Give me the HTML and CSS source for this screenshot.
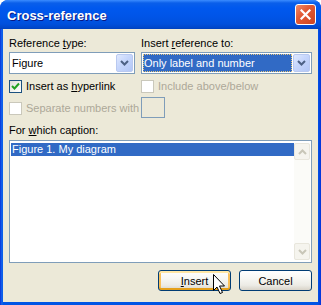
FILE: index.html
```html
<!DOCTYPE html>
<html lang="en">
<head>
    <meta charset="UTF-8">
    <title>Cross-reference</title>
    <link rel="stylesheet" href="styles.css">
</head>
<body>
    <div class="window">
        <div class="titlebar">
            <span class="title">Cross-reference</span>
            <span class="close">
                <svg width="11" height="11" viewBox="0 0 11 11"><path d="M1.5 1.5 L9.5 9.5 M9.5 1.5 L1.5 9.5" stroke="#fff" stroke-width="2.2" stroke-linecap="square"/></svg>
            </span>
        </div>
        <div class="client">
            <div class="grid">
                <div class="field">
                    <label>Reference <u>t</u>ype:</label>
                    <div class="combo">
                        <span class="combo-text">Figure</span>
                        <span class="drop"><svg width="9" height="6" viewBox="0 0 9 6"><path d="M1 1 L4.5 4.5 L8 1" fill="none" stroke="#4d6185" stroke-width="2"/></svg></span>
                    </div>
                </div>
                <div class="field">
                    <label>Insert <u>r</u>eference to:</label>
                    <div class="combo">
                        <span class="combo-text focused">Only label and number</span>
                        <span class="drop"><svg width="9" height="6" viewBox="0 0 9 6"><path d="M1 1 L4.5 4.5 L8 1" fill="none" stroke="#4d6185" stroke-width="2"/></svg></span>
                    </div>
                </div>
                <div class="check-row">
                    <span class="check checked"><svg width="9" height="9" viewBox="0 0 9 9"><path d="M1 4 L3.5 6.5 L8 1.5" fill="none" stroke="#21a121" stroke-width="2"/></svg></span>
                    <span>Insert as <u>h</u>yperlink</span>
                </div>
                <div class="check-row disabled">
                    <span class="check"></span>
                    <span>Include above/below</span>
                </div>
                <div class="check-row disabled second">
                    <span class="check"></span>
                    <span>Separate numbers with</span>
                </div>
                <div class="small-box"></div>
            </div>

            <label class="caption-label">For <u>w</u>hich caption:</label>
            <div class="listbox">
                <div class="items">
                    <div class="item selected">Figure 1. My diagram</div>
                </div>
                <div class="scrollbar">
                    <span class="sb-btn"><svg width="9" height="6" viewBox="0 0 9 6"><path d="M1 5 L4.5 1.5 L8 5" fill="none" stroke="#c8c6b8" stroke-width="2"/></svg></span>
                    <span class="sb-track"></span>
                    <span class="sb-btn"><svg width="9" height="6" viewBox="0 0 9 6"><path d="M1 1 L4.5 4.5 L8 1" fill="none" stroke="#c8c6b8" stroke-width="2"/></svg></span>
                </div>
            </div>

            <div class="buttons">
                <button class="btn hot"><u>I</u>nsert</button>
                <button class="btn">Cancel</button>
            </div>
        </div>

        <svg class="cursor" width="14" height="22" viewBox="0 0 14 22">
            <path d="M1.5 1.5 L1.5 17.5 L5 14 L8 20.5 L10.5 19.5 L7.5 13 L12.5 13 Z" fill="#fff" stroke="#000" stroke-width="1" stroke-linejoin="miter"/>
        </svg>
    </div>
</body>
</html>
```

FILE: styles.css
```css
html {
    background: #ffffff;
}

body {
    margin: 0;
    font-family: "Liberation Sans", Arial, sans-serif;
    font-size: 11px;
    color: #000;
}

.window {
    position: relative;
    width: 321px;
    height: 305px;
    display: flex;
    flex-direction: column;
    background: linear-gradient(90deg, #0831d9 0, #166aee 2px, #0055e5 3px, #0055e5 318px, #0831d9 100%);
    border-radius: 8px 8px 0 0;
    overflow: hidden;
}

.titlebar {
    height: 29px;
    flex: none;
    display: flex;
    align-items: center;
    justify-content: space-between;
    padding: 0 5px 0 7px;
    background: linear-gradient(180deg, #3b8cff 0, #0a5fea 3px, #0058ee 8px, #0055e8 16px, #0050dc 24px, #0046c8 28px, #0040b8 29px);
}

.title {
    color: #fff;
    font-weight: bold;
    font-size: 13px;
    padding-top: 1px;
    text-shadow: 1px 1px 0 #0a1883;
}

.close {
    width: 19px;
    height: 19px;
    display: flex;
    align-items: center;
    justify-content: center;
    border: 1px solid #fff;
    border-radius: 3px;
    background: linear-gradient(135deg, #f08c6c 0, #e25a36 40%, #cc4420 100%);
}

.client {
    flex: 1;
    margin: 0 3px 3px 3px;
    background: #ece9d8;
    padding: 8px 6px 11px 6px;
    display: flex;
    flex-direction: column;
}

.grid {
    display: grid;
    grid-template-columns: 126px 171px;
    column-gap: 6px;
}

label {
    display: block;
    line-height: 13px;
}

.field label {
    margin-bottom: 2px;
}

.combo {
    height: 18px;
    border: 1px solid #7f9db9;
    background: #fff;
    padding: 1px;
    display: flex;
    align-items: stretch;
    gap: 1px;
}

.combo-text {
    flex: 1;
    line-height: 18px;
    padding-left: 1px;
}

.combo-text.focused {
    background: #316ac5;
    color: #fff;
    border: 1px dotted #e8c87a;
    line-height: 16px;
    padding-left: 0;
}

.drop {
    width: 15px;
    flex: none;
    display: flex;
    align-items: center;
    justify-content: center;
    border: 1px solid #b9c9f0;
    border-radius: 2px;
    background: linear-gradient(135deg, #e0e9fe 0, #c6d6fc 45%, #b3c7f6 100%);
}

.check-row {
    display: flex;
    align-items: center;
    gap: 4px;
    line-height: 13px;
    margin-top: 6px;
    white-space: nowrap;
}

.check-row.second {
    margin-top: 6px;
}

.check-row.disabled {
    color: #aca899;
}

.check {
    width: 11px;
    height: 11px;
    flex: none;
    border: 1px solid #1c5180;
    background: linear-gradient(135deg, #dcdcd7 0, #f4f4f0 60%, #fff 100%);
    display: flex;
    align-items: center;
    justify-content: center;
}

.disabled .check {
    border-color: #cac8bb;
    background: #fff;
}

.small-box {
    width: 22px;
    height: 19px;
    margin-top: 4px;
    border: 1px solid #7f9db9;
    background: #ece9d8;
}

.caption-label {
    margin-top: 6px;
    margin-bottom: 3px;
}

.listbox {
    height: 117px;
    border: 1px solid #7f9db9;
    background: #fff;
    padding: 2px 1px 2px 1px;
    display: flex;
}

.items {
    flex: 1;
}

.item {
    line-height: 13px;
    padding-left: 1px;
}

.item.selected {
    background: #316ac5;
    color: #fff;
}

.scrollbar {
    width: 16px;
    display: flex;
    flex-direction: column;
    background: #fbfbf8;
}

.sb-btn {
    height: 15px;
    flex: none;
    display: flex;
    align-items: center;
    justify-content: center;
    border: 1px solid #e8e6dc;
    border-radius: 2px;
    background: #f5f4ee;
}

.sb-track {
    flex: 1;
}

.buttons {
    margin-top: 7px;
    display: flex;
    justify-content: flex-end;
    gap: 8px;
}

.btn {
    width: 73px;
    height: 21px;
    padding: 0;
    font-family: "Liberation Sans", Arial, sans-serif;
    font-size: 11px;
    color: #000;
    border: 1px solid #003c74;
    border-radius: 3px;
    background: linear-gradient(180deg, #ffffff 0, #f7f7f3 40%, #ecebe5 75%, #d8d3c8 100%);
}

.btn.hot {
    box-shadow: inset 0 2px 0 #ffe7a6, inset 0 -2px 0 #e5a01a, inset 2px 0 0 #f9c05a, inset -2px 0 0 #f9c05a;
}

.cursor {
    position: absolute;
    left: 212px;
    top: 273px;
}
```
